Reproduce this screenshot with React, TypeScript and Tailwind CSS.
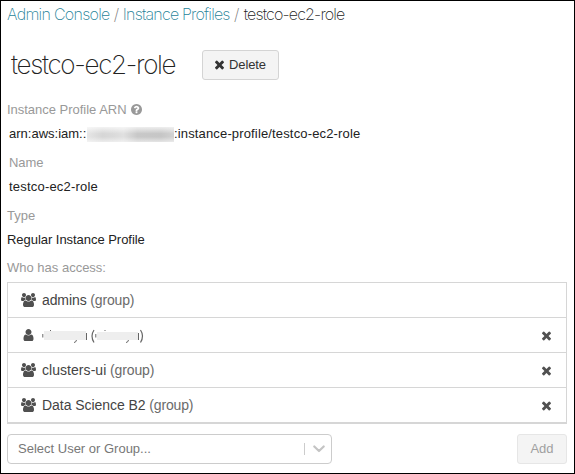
import React from "react";

const GLYPHS = {
  times: {
    box: "302 302 1188 1188",
    d: "M1490 1322q0 40-28 68l-136 136q-28 28-68 28t-68-28l-294-294-294 294q-28 28-68 28t-68-28l-136-136q-28-28-28-68t28-68l294-294-294-294q-28-28-28-68t28-68l136-136q28-28 68-28t68 28l294 294 294-294q28-28 68-28t68 28l136 136q28 28 28 68t-28 68l-294 294 294 294q28 28 28 68z",
  },
  users: {
    box: "-64 0 1920 1792",
    d: "M529 896q-162 5-265 128h-134q-82 0-138-40.5t-56-118.5q0-353 124-353 6 0 43.5 21t97.5 42.5 119 21.5q67 0 133-23-5 37-5 66 0 139 81 256zm1071 637q0 120-73 189.5t-194 69.5h-874q-121 0-194-69.5t-73-189.5q0-53 3.5-103.5t14-109 26.5-108.5 43-97.5 62-81 85.5-53.5 111.5-20q10 0 43 21.5t73 48 107 48 135 21.5 135-21.5 107-48 73-48 43-21.5q61 0 111.5 20t85.5 53.5 62 81 43 97.5 26.5 108.5 14 109 3.5 103.5zm-1024-1277q0 106-75 181t-181 75-181-75-75-181 75-181 181-75 181 75 75 181zm704 384q0 159-112.5 271.5t-271.5 112.5-271.5-112.5-112.5-271.5 112.5-271.5 271.5-112.5 271.5 112.5 112.5 271.5zm576 225q0 78-56 118.5t-138 40.5h-134q-103-123-265-128 81-117 81-256 0-29-5-66 66 23 133 23 59 0 119-21.5t97.5-42.5 43.5-21q124 0 124 353zm-128-609q0 106-75 181t-181 75-181-75-75-181 75-181 181-75 181 75 75 181z",
  },
  user: {
    box: "256 128 1280 1536",
    d: "M1536 1399q0 109-62.5 187t-150.5 78h-854q-88 0-150.5-78t-62.5-187q0-85 8.5-160.5t31.5-152 58.5-131 94-89 134.5-34.5q131 128 313 128t313-128q76 0 134.5 34.5t94 89 58.5 131 31.5 152 8.5 160.5zm-256-887q0 159-112.5 271.5t-271.5 112.5-271.5-112.5-112.5-271.5 112.5-271.5 271.5-112.5 271.5 112.5 112.5 271.5z",
  },
  question: {
    box: "128 128 1536 1536",
    d: "M1024 1376v-192q0-14-9-23t-23-9h-192q-14 0-23 9t-9 23v192q0 14 9 23t23 9h192q14 0 23-9t9-23zm256-672q0-88-55.5-163t-138.5-116-170-41q-243 0-371 213-15 24 8 42l132 100q7 6 19 6 16 0 25-12 53-68 86-92 34-24 86-24 48 0 85.5 26t37.5 59q0 38-20 61t-68 45q-63 28-115.5 86.5t-52.5 125.5v36q0 14 9 23t23 9h192q14 0 23-9t9-23q0-19 21.5-49.5t54.5-49.5q32-18 49-28.5t46-35 44.5-48 28-60.5 12.5-81zm384 192q0 209-103 385.5t-279.5 279.5-385.5 103-385.5-103-279.5-279.5-103-385.5 103-385.5 279.5-279.5 385.5-103 385.5 103 279.5 279.5 103 385.5z",
  },
};

function Glyph({ name, className }: { name: keyof typeof GLYPHS; className: string }) {
  return (
    <svg viewBox={GLYPHS[name].box} className={className} fill="currentColor" overflow="visible" aria-hidden="true">
      <path d={GLYPHS[name].d} />
    </svg>
  );
}

type Member = { name: string; kind: "group" | "hidden"; tracking: string; removable: boolean };

const MEMBERS: Member[] = [
  { name: "admins", kind: "group", tracking: "tracking-[-0.1px]", removable: false },
  { name: "", kind: "hidden", tracking: "tracking-normal", removable: true },
  { name: "clusters-ui", kind: "group", tracking: "tracking-[0.05px]", removable: true },
  { name: "Data Science B2", kind: "group", tracking: "tracking-[-0.05px]", removable: true },
];

function RedactedName() {
  return (
    <svg viewBox="0 0 104 17" className="h-[17px] w-[104px]" aria-hidden="true">
      <g fill="#eeeeee">
        <path d="M2 4h42v9H2zM55 5h41v8H55z" />
      </g>
      <g stroke="#666" strokeWidth="1" fill="none">
        <path d="M.8 7v3.500M8.500 3v1M32 15.500q2 0 2.500-2.500M44.500 6v7M53.800 7v3.500M63 3v1M84 15.500q2 0 2.500-2.500M96.500 6v7" />
        <path d="M52 3q-4 6 0 12.500M98.500 3q4 6 0 12.500" strokeWidth="1.2" />
      </g>
    </svg>
  );
}

function MemberRow({ member }: { member: Member }) {
  return (
    <li className="flex h-[35px] items-center border-t border-[#d6d6d6] pl-[13px] pr-[15px] text-[#505050]">
      <span className="flex w-[21px] shrink-0">
        {member.kind === "group" ? (
          <Glyph name="users" className="h-[14px] w-[15px]" />
        ) : (
          <Glyph name="user" className="ml-[2px] h-[12px] w-[11px]" />
        )}
      </span>
      {member.kind === "group" ? (
        <span className="text-[14px] leading-[18px] text-[#444]">
          <span className={member.tracking}>{member.name}</span>
          <span className="tracking-[-0.15px] text-[#6b6b6b]"> (group)</span>
        </span>
      ) : (
        <RedactedName />
      )}
      {member.removable && (
        <button className="ml-auto">
          <Glyph name="times" className="h-[9px] w-[9px]" />
        </button>
      )}
    </li>
  );
}

export default function App() {
  return (
    <main className="flex h-[474px] w-[575px] flex-col border border-black bg-white pl-[6px] pr-[7px] font-['Liberation_Sans',Arial,sans-serif] text-[13px] leading-4 text-[#222]">
      <nav className="flex h-[26px] items-center whitespace-pre font-['Inter',sans-serif] text-[16px] font-extralight tracking-[-0.71px] text-[#1f8399]">
        <a>Admin Console</a>
        <span className="tracking-[-0.4px] text-[#777]"> / </span>
        <a className="tracking-[-0.8px]">Instance Profiles</a>
        <span className="tracking-[-0.1px] text-[#777]"> / </span>
        <span className="tracking-[-0.84px] text-[#222]">testco-ec2-role</span>
      </nav>
      <header className="mt-[23px] flex h-[30px] items-center">
        <h1 className="w-[195px] pl-[4px] pb-px font-['Inter',sans-serif] text-[26px] font-extralight leading-[30px] tracking-[-1.33px] text-[#222]">
          testco-ec2-role
        </h1>
        <button className="flex h-[30px] w-[77px] items-center justify-center gap-[5px] rounded-[3px] border border-[#d4d4d4] bg-[#f4f4f4] text-[#333]">
          <Glyph name="times" className="mb-px h-[9px] w-[9px]" />
          <span className="tracking-[-0.1px]">Delete</span>
        </button>
      </header>
      <div className="mt-[22px] flex h-4 items-center gap-[4px] text-[#999]">
        <span className="tracking-[-0.02px]">Instance Profile ARN</span>
        <Glyph name="question" className="mb-px h-[11px] w-[11px]" />
      </div>
      <div className="mt-[8px] flex h-4 items-center pl-[2px]">
        <span className="w-[78px]">arn:aws:iam::</span>
        <span className="h-[15px] w-[87px] bg-[linear-gradient(90deg,#e6e6e6_0%,#d6d6d6_18%,#dadada_30%,#e0e0e0_42%,#c8c8c8_58%,#c6c6c6_85%,#d2d2d2_100%)]">
          <span className="block h-full bg-[linear-gradient(180deg,rgba(255,255,255,0.7),rgba(255,255,255,0)_45%,rgba(255,255,255,0)_65%,rgba(255,255,255,0.55))]" />
        </span>
        <span className="tracking-[0.15px]">:instance-profile/testco-ec2-role</span>
      </div>
      <div className="mt-[13px] h-4 pl-[2px] tracking-[-0.1px] text-[#999]">Name</div>
      <div className="mt-[8px] h-4 pl-[2px] tracking-[0.2px]">testco-ec2-role</div>
      <div className="mt-[13px] h-4 text-[#999]">Type</div>
      <div className="mt-[8px] h-4 tracking-[-0.04px]">Regular Instance Profile</div>
      <div className="mt-[12px] h-4 text-[#999]">Who has access:</div>
      <ul className="mt-[6px] shrink-0 border-x border-b-2 border-[#d6d6d6]">
        {MEMBERS.map((m, i) => (
          <MemberRow key={i} member={m} />
        ))}
      </ul>
      <footer className="mt-[10px] flex shrink-0 justify-between">
        <div className="flex h-[30px] w-[325px] items-center rounded-[4px] border border-[#ccc] pl-[10px] text-[#777]">
          <span>Select User or Group...</span>
          <span className="ml-auto h-3 w-px bg-[#ccc]" />
          <svg viewBox="0 0 12 8" className="ml-[8px] mr-[6px] h-2 w-3" fill="none" stroke="#c4c4c4" strokeWidth="2.2" strokeLinecap="round" strokeLinejoin="round">
            <path d="M1.300 1.500L6 6l4.700-4.500" />
          </svg>
        </div>
        <button className="h-[30px] w-[50px] rounded-[3px] border border-[#e6e6e6] bg-[#f4f4f4] text-[#a0a0a0]">Add</button>
      </footer>
    </main>
  );
}
